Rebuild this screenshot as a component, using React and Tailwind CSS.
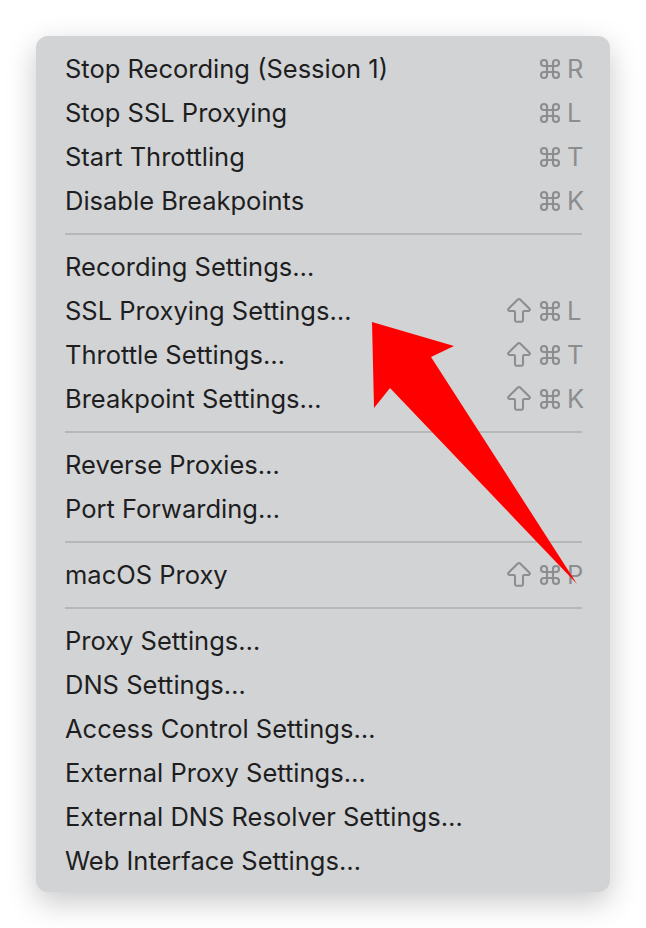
import { Command, ArrowBigUp } from 'lucide-react'

const sections = [
  [
    { label: 'Stop Recording (Session 1)', key: 'R' },
    { label: 'Stop SSL Proxying', key: 'L' },
    { label: 'Start Throttling', key: 'T' },
    { label: 'Disable Breakpoints', key: 'K' },
  ],
  [
    { label: 'Recording Settings…' },
    { label: 'SSL Proxying Settings…', key: 'L', shift: true },
    { label: 'Throttle Settings…', key: 'T', shift: true },
    { label: 'Breakpoint Settings…', key: 'K', shift: true },
  ],
  [{ label: 'Reverse Proxies…' }, { label: 'Port Forwarding…' }],
  [{ label: 'macOS Proxy', key: 'P', shift: true }],
  [
    { label: 'Proxy Settings…' },
    { label: 'DNS Settings…' },
    { label: 'Access Control Settings…' },
    { label: 'External Proxy Settings…' },
    { label: 'External DNS Resolver Settings…' },
    { label: 'Web Interface Settings…' },
  ],
]

function Shortcut({ k, shift }) {
  return (
    <div className="flex items-center text-[#8c8d8f]">
      {shift && <ArrowBigUp size={32} strokeWidth={1.55} className="mr-[3px]" />}
      <Command size={24} strokeWidth={2.15} />
      <span className="w-[17px] ml-[5px] text-[25.5px] leading-none">{k}</span>
    </div>
  )
}

function Row({ item }) {
  return (
    <div className="h-[44px] flex items-center justify-between pl-[29px] pr-[26px]">
      <span className="text-[25.5px] text-[#1e1e1f]">{item.label}</span>
      {item.key && <Shortcut k={item.key} shift={item.shift} />}
    </div>
  )
}

export default function App() {
  return (
    <div
      className="relative w-[646px] h-[928px] bg-white pt-[36px] pl-[36px]"
      style={{ fontFamily: 'Inter, "Noto Sans", sans-serif' }}
    >
      <div className="w-[574px] h-[856px] rounded-[12px] bg-[#d2d3d5] pt-[11px] pb-[9px] shadow-[0_10px_30px_rgba(0,0,0,0.22)]">
        {sections.map((section, i) => (
          <div key={i}>
            {i > 0 && (
              <div className="h-[22px] pt-[10px] pl-[29px] pr-[28px]">
                <div className="h-[2px] w-full bg-[#b6b7b9]" />
              </div>
            )}
            {section.map((item) => (
              <Row key={item.label} item={item} />
            ))}
          </div>
        ))}
      </div>

      <svg className="absolute inset-0 pointer-events-none" width="646" height="928">
        <polygon
          points="372,322 454,346 431,357 577,584 390,388 374,408"
          fill="#ff0000"
        />
      </svg>
    </div>
  )
}
